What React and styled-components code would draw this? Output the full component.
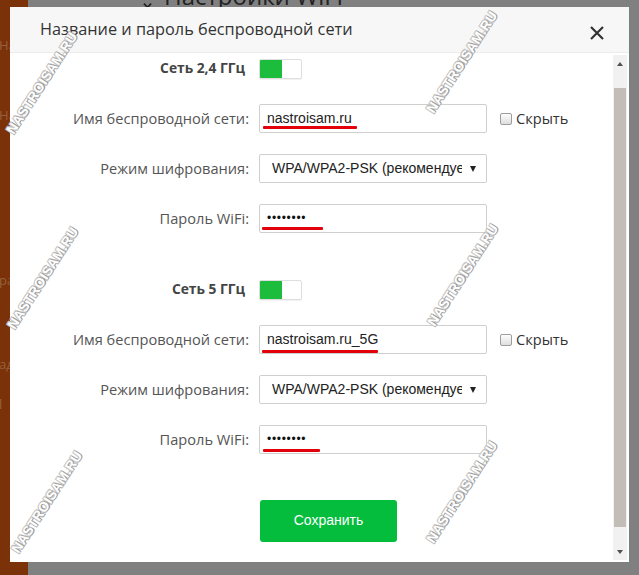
import React from "react";
import styled, { createGlobalStyle } from "styled-components";

const GlobalStyle = createGlobalStyle`
  html, body { margin: 0; padding: 0; width: 100%; height: 100%; overflow: hidden; }
  body { background: #808080; font-family: "Open Sans", "Liberation Sans", sans-serif; }
  * { box-sizing: border-box; }
`;

const Page = styled.div`
  position: relative;
  display: flex;
  width: 639px;
  height: 575px;
  overflow: hidden;
`;

const Sidebar = styled.nav`
  width: 28px;
  flex: none;
  background: #7b3208;
  display: flex;
  flex-direction: column;
  overflow: hidden;
  padding-top: 36px;
`;

const SideItem = styled.div`
  font: 13px "Open Sans", sans-serif;
  color: rgba(255, 255, 255, 0.22);
  white-space: nowrap;
  margin-top: ${(p) => p.$gap}px;
  margin-left: -1px;
`;

const Main = styled.main`
  flex: 1;
  background: #808080;
  padding-left: 115px;
`;

const Heading = styled.h1`
  margin: -16px 0 0 0;
  font: 400 24px/24px "Open Sans", sans-serif;
  color: #222;
  display: flex;
  align-items: flex-end;
  gap: 12px;
  svg { margin-bottom: -2px; }
`;

const Modal = styled.div`
  position: absolute;
  left: 10px;
  top: 7px;
  width: 619px;
  height: 555px;
  background: #fff;
  display: flex;
  flex-direction: column;
  z-index: 2;
`;

const Header = styled.header`
  height: 46px;
  flex: none;
  background: #f7f7f7;
  border-bottom: 1px solid #ececec;
  display: flex;
  align-items: center;
  justify-content: space-between;
  padding: 0 24px 0 30px;
`;

const Title = styled.h2`
  margin: 0 0 2px 0;
  font: 400 16.3px "Open Sans", sans-serif;
  color: #333;
`;

const Close = styled.button`
  border: 0;
  background: none;
  padding: 0;
  width: 16px;
  height: 16px;
  display: flex;
  margin-top: 6px;
`;

const BodyRow = styled.div`
  flex: 1;
  min-height: 0;
  display: flex;
`;

const Content = styled.div`
  flex: 1;
  padding-top: 1px;
`;

const Section = styled.div`
  display: grid;
  grid-template-columns: 239px 228px auto;
  grid-auto-rows: 29px;
  column-gap: 10px;
  row-gap: 21px;
  margin-top: ${(p) => p.$top || 0}px;
`;

const Label = styled.div`
  justify-self: end;
  align-self: center;
  font: ${(p) => (p.$bold ? "700 13.8px" : "400 14.6px")} "Open Sans", sans-serif;
  color: ${(p) => (p.$bold ? "#444" : "#555")};
  white-space: nowrap;
  margin-top: -2px;
  margin-right: ${(p) => (p.$bold ? 4 : 0)}px;
`;

const Toggle = styled.div`
  align-self: center;
  grid-column: 2 / 4;
  width: 43px;
  height: 20px;
  border: 1px solid #dedede;
  border-radius: 2px;
  background: #fff;
  display: flex;
  box-shadow: 0 1px 1px rgba(0, 0, 0, 0.06);
  &::before {
    content: "";
    width: 22px;
    background: #1cbd3c;
    border-radius: 1px 0 0 1px;
  }
`;

const Field = styled.div`
  position: relative;
  height: 29px;
  border: 1px solid #cfcfcf;
  border-radius: 2px;
  background: #fff;
  display: flex;
  align-items: center;
  padding: 0 ${(p) => (p.$select ? "10px 0 12px" : "0 0 7px")};
  font: 14px "Liberation Sans", Arial, sans-serif;
  color: #222;
  overflow: hidden;
  grid-column: ${(p) => (p.$wide ? "2 / 4" : "auto")};
  width: 228px;
`;

const FieldText = styled.span`
  flex: 1;
  white-space: nowrap;
  overflow: hidden;
  padding-bottom: 2px;
`;

const Dots = styled.span`
  font: 12px "Liberation Sans", Arial, sans-serif;
  letter-spacing: 0.7px;
  padding-bottom: 2px;
  color: #111;
`;

const Arrow = styled.span`
  flex: none;
  width: 0;
  height: 0;
  margin-left: 8px;
  border-left: 3.5px solid transparent;
  border-right: 3.5px solid transparent;
  border-top: 6px solid #222;
`;

const Mark = styled.span`
  position: absolute;
  left: ${(p) => p.$left}px;
  bottom: ${(p) => p.$bottom}px;
  width: ${(p) => p.$width}px;
  height: 3px;
  background: #e2000b;
  border-radius: 1px;
`;

const Hide = styled.label`
  align-self: center;
  display: flex;
  align-items: center;
  gap: 4px;
  margin-left: 3px;
  font: 14.6px "Open Sans", sans-serif;
  color: #333;
  margin-top: -2px;
`;

const Check = styled.span`
  width: 12px;
  height: 12px;
  border: 1px solid #9d9d9d;
  border-radius: 2px;
  background: linear-gradient(#fdfdfd, #dedede);
  margin-top: 2px;
`;

const ButtonRow = styled.div`
  padding: 46px 0 0 250px;
`;

const SaveButton = styled.button`
  width: 137px;
  height: 42px;
  border: 0;
  border-radius: 3px;
  background: #04bd3d;
  color: #fff;
  font: 14px "Liberation Sans", Arial, sans-serif;
  padding: 0 0 2px 0;
`;

const Scrollbar = styled.div`
  width: 14px;
  flex: none;
  margin: 2px 2px 2px 0;
  background: #f1f1f1;
  display: flex;
  flex-direction: column;
  align-items: center;
`;

const ScrollArrow = styled.div`
  height: 17px;
  flex: none;
  display: flex;
  align-items: center;
  justify-content: center;
  &::after {
    content: "";
    border-left: 3.5px solid transparent;
    border-right: 3.5px solid transparent;
    ${(p) => (p.$down ? "border-top: 4px solid #505050;" : "border-bottom: 4px solid #505050;")}
  }
`;

const Thumb = styled.div`
  width: 12px;
  height: 439px;
  margin: 16px 0 16px;
  background: #c2bdb7;
`;

const Watermark = styled.div`
  position: absolute;
  left: ${(p) => p.$x}px;
  top: ${(p) => p.$y}px;
  transform: translate(-50%, -50%) rotate(-57deg);
  font: 700 13.5px "Liberation Sans", Arial, sans-serif;
  color: #fff;
  letter-spacing: 0.3px;
  white-space: nowrap;
  text-shadow: 1px 1px 0 #9a9a9a, -1px -1px 0 #c8c8c8, 1px -1px 0 #c0c0c0, -1px 1px 0 #b5b5b5;
  z-index: 5;
  pointer-events: none;
`;

const marks = [
  [42, 83], [462, 62], [43, 278], [463, 275], [47, 502], [462, 492],
];

function Network({ title, name, nameMark, passMark, top }) {
  return (
    <Section $top={top}>
      <Label $bold>{title}</Label>
      <Toggle />
      <Label>Имя беспроводной сети:</Label>
      <Field>
        <FieldText>{name}</FieldText>
        <Mark {...nameMark} />
      </Field>
      <Hide>
        <Check />
        Скрыть
      </Hide>
      <Label>Режим шифрования:</Label>
      <Field $select $wide>
        <FieldText>WPA/WPA2-PSK (рекомендуется)</FieldText>
        <Arrow />
      </Field>
      <Label>Пароль WiFi:</Label>
      <Field $wide>
        <Dots>••••••••</Dots>
        <Mark {...passMark} />
      </Field>
    </Section>
  );
}

export default function App() {
  return (
    <>
      <GlobalStyle />
      <Page>
        <Sidebar>
          <SideItem $gap={0}>Настройки</SideItem>
          <SideItem $gap={52}>Настройки</SideItem>
          <SideItem $gap={147}>рабочий</SideItem>
          <SideItem $gap={66}>адрес</SideItem>
          <SideItem $gap={22}>l</SideItem>
        </Sidebar>
        <Main>
          <Heading>
            <svg width="9" height="9" viewBox="0 0 10 10">
              <path d="M1 3 L5 7 L9 3" fill="none" stroke="#222" strokeWidth="2" />
            </svg>
            Настройки WiFi
          </Heading>
        </Main>
        <Modal>
          <Header>
            <Title>Название и пароль беспроводной сети</Title>
            <Close aria-label="close">
              <svg width="16" height="16" viewBox="0 0 16 16">
                <path d="M2 2 L14 14 M14 2 L2 14" stroke="#333" strokeWidth="2.2" />
              </svg>
            </Close>
          </Header>
          <BodyRow>
            <Content>
              <Network
                title="Сеть 2,4 ГГц"
                name="nastroisam.ru"
                nameMark={{ $left: 3, $bottom: 3, $width: 94 }}
                passMark={{ $left: 2, $bottom: 2, $width: 61 }}
              />
              <Network
                top={42}
                title="Сеть 5 ГГц"
                name="nastroisam.ru_5G"
                nameMark={{ $left: 2, $bottom: 0, $width: 116 }}
                passMark={{ $left: 3, $bottom: 1, $width: 57 }}
              />
              <ButtonRow>
                <SaveButton>Сохранить</SaveButton>
              </ButtonRow>
            </Content>
            <Scrollbar>
              <ScrollArrow />
              <Thumb />
              <ScrollArrow $down />
            </Scrollbar>
          </BodyRow>
        </Modal>
        {marks.map(([x, y], i) => (
          <Watermark key={i} $x={x} $y={y}>NASTROISAM.RU</Watermark>
        ))}
      </Page>
    </>
  );
}
